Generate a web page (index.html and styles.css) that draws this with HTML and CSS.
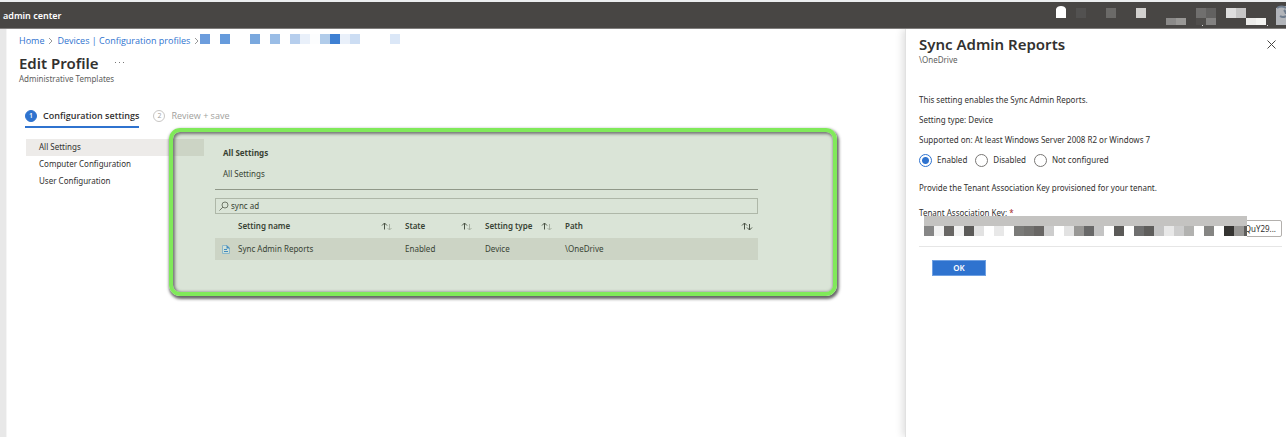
FILE: index.html
```html
<!DOCTYPE html>
<html lang="en">
<head>
<meta charset="utf-8">
<title>Edit Profile - admin center</title>
<link rel="stylesheet" href="styles.css">
</head>
<body>
<header class="topbar">
  <span class="brand">admin center</span>
  <svg class="topbar-tools" width="230" height="22" viewBox="1056 5 230 22" aria-hidden="true" shape-rendering="crispEdges">
    <path d="M1056 18V9q1-3 5-3t5 3v9z" fill="#fff" shape-rendering="auto"/>
    <path d="M1076 8h10v10h-10z" fill="#525150"/>
    <path d="M1106 8h10v10h-10z" fill="#6b6a68"/>
    <path d="M1136 8h10v10h-10z" fill="#d2d1cf"/>
    <path d="M1166 18h10v7h-10z" fill="#8b8a89"/>
    <path d="M1176 18h10v7h-10z" fill="#999896"/>
    <path d="M1196 8h10v10h-10z" fill="#706f6e"/>
    <path d="M1206 8h10v10h-10z" fill="#626160"/>
    <path d="M1196 18h10v7h-10z" fill="#504e4c"/>
    <path d="M1206 18h10v7h-10z" fill="#828180"/>
    <path d="M1202 25h1v1h-1zM1267 25h1v1h-1z" fill="#ddd"/>
    <path d="M1226 8h10v10h-10z" fill="#dedede"/>
    <path d="M1236 8h10v10h-10z" fill="#c6c6c6"/>
    <path d="M1246 18h10v7h-10z" fill="#ececea"/>
    <path d="M1256 18h10v7h-10z" fill="#f3f4f1"/>
    <path d="M1276 8q4-3 10-2v19h-10z" fill="#b2b5ba"/>
    <path d="M1277 8q4-3 9 0M1280 16q3 2 6 0M1284 10q2 2 2 4" fill="none" stroke="#6f7d8e" stroke-width="2" shape-rendering="auto"/>
  </svg>
</header>
<div class="shell">
  <div class="rail"></div>
  <main class="main">
    <nav class="crumbs" aria-label="Breadcrumb">
      <a href="#">Home</a>
      <svg class="chevron" width="5" height="8" viewBox="0 0 5 8"><path d="M1 1l3 3-3 3"/></svg>
      <a href="#">Devices | Configuration profiles</a>
      <svg class="chevron" width="5" height="8" viewBox="0 0 5 8"><path d="M1 1l3 3-3 3"/></svg>
      <svg class="crumb-mask" width="200" height="10" viewBox="0 0 200 10" shape-rendering="crispEdges" aria-hidden="true">
        <path d="M0 0h10v10H0z" fill="#6c9ddd"/>
        <path d="M20 0h10v10H20z" fill="#669bdc"/>
        <path d="M50 0h10v10H50z" fill="#7aa8de"/>
        <path d="M70 0h10v10H70z" fill="#9abde6"/>
        <path d="M90 0h10v10H90z" fill="#b6ceed"/>
        <path d="M100 0h10v10h-10z" fill="#e9f0fa"/>
        <path d="M110 0h10v10h-10z" fill="#fcfdfe"/>
        <path d="M120 0h10v10h-10z" fill="#b1ccea"/>
        <path d="M130 0h10v10h-10z" fill="#3e80d3"/>
        <path d="M140 0h10v10h-10z" fill="#e9f0fa"/>
        <path d="M150 0h10v10h-10z" fill="#ccddf3"/>
        <path d="M190 0h10v10h-10z" fill="#dbe7f7"/>
      </svg>
    </nav>
    <div class="title-row">
      <h1>Edit Profile</h1>
      <button class="more" type="button" aria-label="More">
        <svg width="9" height="3" viewBox="0 0 9 3"><path d="M0 1h1v1H0zM4 1h1v1H4zM8 1h1v1H8z"/></svg>
      </button>
    </div>
    <p class="subtitle">Administrative Templates</p>
    <div class="steps">
      <button class="step step-active" type="button"><span class="step-num">1</span>Configuration settings</button>
      <button class="step" type="button"><span class="step-num">2</span>Review + save</button>
    </div>
    <div class="workspace">
      <nav class="side" aria-label="Settings">
        <a class="side-item side-current" href="#">All Settings</a>
        <a class="side-item" href="#">Computer Configuration</a>
        <a class="side-item" href="#">User Configuration</a>
      </nav>
      <section class="content">
        <h2>All Settings</h2>
        <p class="content-sub">All Settings</p>
        <div class="search">
          <svg width="10" height="10" viewBox="0 0 10 10" aria-hidden="true"><circle cx="6" cy="4" r="3"/><path d="M4 6L0.5 9.5"/></svg>
          <input type="text" value="sync ad" aria-label="Search settings">
        </div>
        <table class="grid">
          <colgroup><col class="col-icon"><col class="col-name"><col class="col-mid"><col class="col-mid"><col></colgroup>
          <thead>
            <tr>
              <th></th>
              <th><div class="th">Setting name<svg class="sort" width="12" height="9" viewBox="0 0 12 9"><path d="M3.500 7.500v-6.500M1 3.500l2.500-2.500 2.500 2.500"/><path class="faint" d="M8.500 2v6M6.500 6l2 2 2-2"/></svg></div></th>
              <th><div class="th">State<svg class="sort" width="12" height="9" viewBox="0 0 12 9"><path d="M3.500 7.500v-6.500M1 3.500l2.500-2.500 2.500 2.500"/><path class="faint" d="M8.500 2v6M6.500 6l2 2 2-2"/></svg></div></th>
              <th><div class="th">Setting type<svg class="sort" width="12" height="9" viewBox="0 0 12 9"><path d="M3.500 7.500v-6.500M1 3.500l2.500-2.500 2.500 2.500"/><path class="faint" d="M8.500 2v6M6.500 6l2 2 2-2"/></svg></div></th>
              <th><div class="th th-last">Path<svg class="sort" width="12" height="9" viewBox="0 0 12 9"><path d="M3.500 7.500v-6.500M1 3.500l2.500-2.500 2.500 2.500"/><path d="M8.500 2v6M6 5.500l2.500 2.500 2.500-2.500"/></svg></div></th>
            </tr>
          </thead>
          <tbody>
            <tr>
              <td class="icon-cell"><svg width="8" height="9" viewBox="0 0 8 9"><path d="M.5.500h4.500l2.500 2.500v5.500h-7z" fill="#f4faff" stroke="#9cc6ee"/><path d="M4.500 0v3.500h3.500z" fill="#3f8fe0"/><path d="M2 4.500h3M2 6.500h4" stroke="#3f8fe0"/></svg></td>
              <td>Sync Admin Reports</td>
              <td>Enabled</td>
              <td>Device</td>
              <td>\OneDrive</td>
            </tr>
          </tbody>
        </table>
      </section>
      <div class="highlight"></div>
    </div>
  </main>
  <aside class="panel">
    <div class="panel-head">
      <h2>Sync Admin Reports</h2>
      <button class="close" type="button" aria-label="Close"><svg width="9" height="9" viewBox="0 0 9 9"><path d="M.5.500l8 8M8.500.500l-8 8"/></svg></button>
    </div>
    <p class="panel-path">\OneDrive</p>
    <p class="line">This setting enables the Sync Admin Reports.</p>
    <p class="line">Setting type: Device</p>
    <p class="line">Supported on: At least Windows Server 2008 R2 or Windows 7</p>
    <div class="radios">
      <label><input type="radio" name="state" checked>Enabled</label>
      <label><input type="radio" name="state">Disabled</label>
      <label><input type="radio" name="state">Not configured</label>
    </div>
    <p class="line">Provide the Tenant Association Key provisioned for your tenant.</p>
    <div class="field">
      <label for="key">Tenant Association Key: <span class="req">*</span></label>
      <input id="key" type="text" value="QuY29...">
      <svg class="key-mask" width="323" height="20" viewBox="0 0 323 20" shape-rendering="crispEdges" aria-hidden="true">
        <path d="M0 0h323v20H0z" fill="#fff"/>
        <path d="M0 0h323v10H0z" fill="#c4c3c1"/>
        <path d="M0 10h10v10H0z" fill="#868686"/>
        <path d="M10 10h10v10H10zM30 10h10v10H30z" fill="#f2f2f2"/>
        <path d="M20 10h10v10H20zM110 10h10v10h-10z" fill="#686664"/>
        <path d="M40 10h10v10H40zM190 10h10v10h-10z" fill="#5b5a58"/>
        <path d="M50 10h10v10H50zM140 10h10v10h-10z" fill="#e2e2e2"/>
        <path d="M70 10h10v10H70zM240 10h10v10h-10z" fill="#e8e8e8"/>
        <path d="M90 10h10v10H90z" fill="#7a7a78"/>
        <path d="M100 10h10v10h-10z" fill="#737270"/>
        <path d="M120 10h10v10h-10zM250 10h10v10h-10z" fill="#cdcdcd"/>
        <path d="M150 10h10v10h-10zM310 10h10v10h-10z" fill="#989795"/>
        <path d="M160 10h10v10h-10z" fill="#686868"/>
        <path d="M170 10h10v10h-10zM230 10h10v10h-10z" fill="#c4c4c4"/>
        <path d="M210 10h10v10h-10z" fill="#6f6f6f"/>
        <path d="M220 10h10v10h-10zM320 10h3v10h-3z" fill="#5e5d5b"/>
        <path d="M260 10h10v10h-10z" fill="#b2b2b0"/>
        <path d="M280 10h10v10h-10z" fill="#858583"/>
        <path d="M300 10h10v10h-10z" fill="#343331"/>
      </svg>
    </div>
    <div class="actions"><button class="ok" type="button">OK</button></div>
  </aside>
</div>
</body>
</html>
```
FILE: styles.css
```css
* { box-sizing: border-box; }
html, body { height: 100%; }
body {
  margin: 0;
  display: flex;
  flex-direction: column;
  font: 8px/12px "Noto Sans", "Open Sans", sans-serif;
  color: #323130;
  background: #fff;
}
h1, h2, p { margin: 0; }
a { color: #2f73cf; text-decoration: none; }
button { border: 0; padding: 0; background: none; font: inherit; color: inherit; }
input { font: inherit; color: inherit; }
svg { flex: none; display: block; }

.topbar {
  display: flex;
  justify-content: space-between;
  align-items: center;
  height: 29px;
  padding-left: 3px;
  background: #484644;
  border-top: 2px solid #eceeef;
  border-bottom: 1px solid #807e7d;
  color: #fff;
}
.brand { font-size: 9px; font-weight: 600; padding-top: 2px; }
.topbar-tools { margin-bottom: 1px; align-self: flex-end; }

.shell { display: flex; flex: 1; }
.rail { width: 7px; background: #e8e8e8; border-right: 1px solid #f5f5f5; }
.main { flex: 1; padding-top: 5px; }

.crumbs {
  display: flex;
  align-items: center;
  height: 14px;
  padding-left: 12px;
  gap: 4px;
  font: 9px/12px "Open Sans", "Noto Sans", sans-serif;
}
.chevron path { fill: none; stroke: #999; }
.crumb-mask { margin: -4px 0 0 -3px; }

.title-row { display: flex; align-items: center; gap: 16px; height: 24px; padding: 5px 0 0 12px; }
h1 { font-size: 15px; line-height: 20px; font-weight: 600; }
.more svg { fill: #777; }
.subtitle { padding: 0 0 1px 12px; line-height: 14px; color: #605e5c; }

.steps { display: flex; gap: 14px; padding: 19px 0 0 18px; }
.step {
  display: flex;
  align-items: center;
  gap: 6px;
  height: 22px;
  font: 9px/12px "Open Sans", "Noto Sans", sans-serif;
  color: #a19f9d;
  border-bottom: 2px solid transparent;
}
.step-num {
  display: grid;
  place-items: center;
  width: 12px;
  height: 12px;
  border: 1px solid #c8c6c4;
  border-radius: 50%;
  font-size: 7px;
  line-height: 10px;
}
.step-active { font-weight: 600; color: #323130; border-color: #2f73cf; }
.step-active .step-num { background: #2f73cf; border-color: #2f73cf; color: #fff; }

.workspace { position: relative; display: flex; padding: 11px 147px 36px 19px; }
.side { width: 178px; margin-right: 11px; flex: none; }
.side-item { display: block; padding: 0 0 1px 13px; line-height: 16px; color: #323130; }
.side-current { background: #edebe9; }
.content { flex: 1; padding-top: 7px; }
.content h2 { padding-left: 8px; font-size: 8px; line-height: 14px; font-weight: 700; }
.content-sub { padding: 7px 0 8px 8px; line-height: 14px; border-bottom: 1px solid #a19f9d; }
.search {
  display: flex;
  align-items: center;
  gap: 2px;
  height: 16px;
  margin-top: 8px;
  padding-left: 3px;
  border: 1px solid #c8c6c4;
}
.search svg { fill: none; stroke: #797775; }
.search input { flex: 1; border: 0; padding: 0; height: 12px; background: none; outline: 0; }

.grid { width: 100%; border-collapse: collapse; table-layout: fixed; }
.col-icon { width: 23px; }
.col-name { width: 167px; }
.col-mid { width: 80px; }
.grid th, .grid td { padding: 0; text-align: left; }
.grid th { height: 24px; font-weight: 600; }
.grid td { height: 22px; background: #edebe9; }
.th { display: flex; align-items: center; justify-content: space-between; padding-right: 12px; }
.th-last { padding-right: 5px; }
.sort { fill: none; stroke: #4a4948; }
.sort .faint { stroke: #c0bebc; }
.icon-cell svg { margin-left: 7px; }

.highlight {
  position: absolute;
  top: 0;
  bottom: 0;
  left: 162px;
  right: 68px;
  border: 4px solid #80e95a;
  border-radius: 11px;
  background: rgba(80, 128, 65, 0.21);
  box-shadow: 1px 2px 3px 1px #666, inset 1px 1px 3px 1px #777;
  pointer-events: none;
}

.panel {
  width: 381px;
  padding: 5px 4px 0 13px;
  background: #fff;
  border-left: 1px solid #e1e1e1;
  box-shadow: -2px 0 8px rgba(0, 0, 0, 0.14);
  clip-path: inset(0 0 0 -12px);
}
.panel-head { display: flex; justify-content: space-between; align-items: center; height: 20px; padding-right: 6px; }
.panel-head h2 { font-size: 15px; line-height: 20px; font-weight: 600; }
.close svg { fill: none; stroke: #484644; }
.panel-path { margin-bottom: 24px; color: #605e5c; }
.line { line-height: 20px; }
.radios { display: flex; align-items: center; gap: 8px; height: 20px; margin-bottom: 8px; }
.radios label { display: flex; align-items: center; gap: 5px; }
.radios input {
  appearance: none;
  width: 13px;
  height: 13px;
  margin: 0;
  border: 1px solid #797775;
  border-radius: 50%;
}
.radios input:checked { border-color: #2f73cf; background: radial-gradient(circle, #2f73cf 3px, #fff 4px); }
.field {
  position: relative;
  display: flex;
  flex-direction: column;
  padding: 9px 0 9px;
  border-bottom: 1px solid #e6e6e6;
}
.req { color: #a4262c; }
.field input {
  align-self: stretch;
  height: 17px;
  margin-top: 1px;
  padding: 0 5px;
  border: 1px solid #b3b0ad;
  border-radius: 2px;
  text-align: right;
}
.key-mask {
  position: absolute;
  left: 5px;
  bottom: 10px;
  background: #fff;
  box-shadow: -5px 4px #fff, 0 6px #fff, -5px 6px #fff;
}
.actions { padding: 13px; }
.ok { width: 54px; height: 16px; background: #2f73cf; border: 1px solid #6fa0e2; color: #fff; font-weight: 600; }
```
